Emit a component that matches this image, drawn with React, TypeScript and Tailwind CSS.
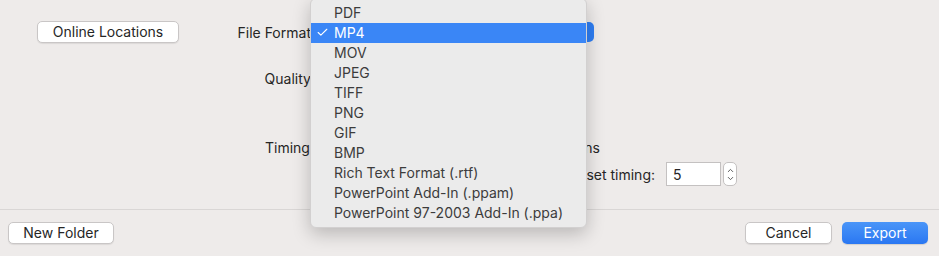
import { Check, ChevronUp, ChevronDown } from 'lucide-react';

const formats = [
  'PDF',
  'MP4',
  'MOV',
  'JPEG',
  'TIFF',
  'PNG',
  'GIF',
  'BMP',
  'Rich Text Format (.rtf)',
  'PowerPoint Add-In (.ppam)',
  'PowerPoint 97-2003 Add-In (.ppa)',
];

function MacButton({ label, className }: { label: string; className?: string }) {
  return (
    <button
      className={
        'h-[22px] rounded-[5px] bg-white border border-[#c9c6c6] shadow-[0_1px_1px_rgba(0,0,0,0.08)] text-[14px] text-[#262626] leading-none ' +
        (className ?? '')
      }
    >
      {label}
    </button>
  );
}

export default function App() {
  return (
    <div
      className="relative w-[939px] h-[256px] overflow-hidden bg-[#eeebea] text-[#262626]"
      style={{ fontFamily: 'Inter, "Liberation Sans", sans-serif' }}
    >
      {/* top section */}
      <div className="h-[209px] flex items-start">
        <div className="pl-[37px] pt-[21px] flex">
          <MacButton label="Online Locations" className="w-[142px]" />
        </div>

        <div className="ml-[8px] pt-[22px] flex flex-col text-[14px]">
          <div className="flex items-center h-[20px]">
            <span className="w-[128px] text-right whitespace-nowrap">File Format:</span>
            <div className="ml-[3px] w-[276px] h-[20px] rounded-[5px] bg-[#2f7ff5]" />
          </div>

          <div className="flex items-center h-[20px] mt-[26px]">
            <span className="w-[128px] text-right">Quality:</span>
          </div>

          <div className="flex items-center h-[20px] mt-[49px]">
            <span className="w-[127px] text-right">Timing:</span>
            <span className="ml-[4px] w-[282px] text-right whitespace-nowrap overflow-hidden">
              Use Recorded Timings and Narrations
            </span>
          </div>

          <div className="flex items-center h-[24px] mt-[5px]">
            <span className="ml-[131px] w-[337px] text-right whitespace-nowrap overflow-hidden">
              Seconds spent on each slide if no set timing:
            </span>
            <div className="ml-[11px] w-[55px] h-[24px] bg-white border border-[#c4c1c1] flex items-center pl-[6px] text-[14px]">
              5
            </div>
            <div className="ml-[2px] w-[14px] h-[24px] rounded-[5px] bg-white border border-[#c4c1c1] flex flex-col items-center justify-center text-[#555]">
              <ChevronUp className="w-[9px] h-[9px] -mb-[1px]" strokeWidth={2.5} />
              <ChevronDown className="w-[9px] h-[9px]" strokeWidth={2.5} />
            </div>
          </div>
        </div>
      </div>

      {/* separator */}
      <div className="h-px bg-[#d9d6d5]" />

      {/* bottom bar */}
      <div className="flex items-center justify-between pt-[12px] pl-[8px] pr-[11px]">
        <MacButton label="New Folder" className="w-[106px]" />
        <div className="flex gap-[10px]">
          <MacButton label="Cancel" className="w-[87px]" />
          <button className="w-[86px] h-[22px] rounded-[5px] bg-gradient-to-b from-[#4a95f8] to-[#2a77f2] shadow-[0_1px_1px_rgba(0,0,0,0.12)] text-[14px] text-white leading-none">
            Export
          </button>
        </div>
      </div>

      {/* open popup menu */}
      <div className="absolute left-[310px] top-[-2px] w-[277px] py-[4px] rounded-[6px] bg-[#ebebeb] border border-[#d2d0d0] shadow-[0_6px_18px_rgba(0,0,0,0.22)]">
        {formats.map((f) => {
          const selected = f === 'MP4';
          return (
            <div
              key={f}
              className={
                'relative h-[20px] flex items-center pl-[23px] pb-[1px] text-[14px] ' +
                (selected ? 'bg-[#3a86f6] text-white' : 'text-[#3c3c3c]')
              }
            >
              {selected && (
                <Check className="absolute left-[5px] w-[13px] h-[13px]" strokeWidth={2} />
              )}
              {f}
            </div>
          );
        })}
      </div>
    </div>
  );
}
